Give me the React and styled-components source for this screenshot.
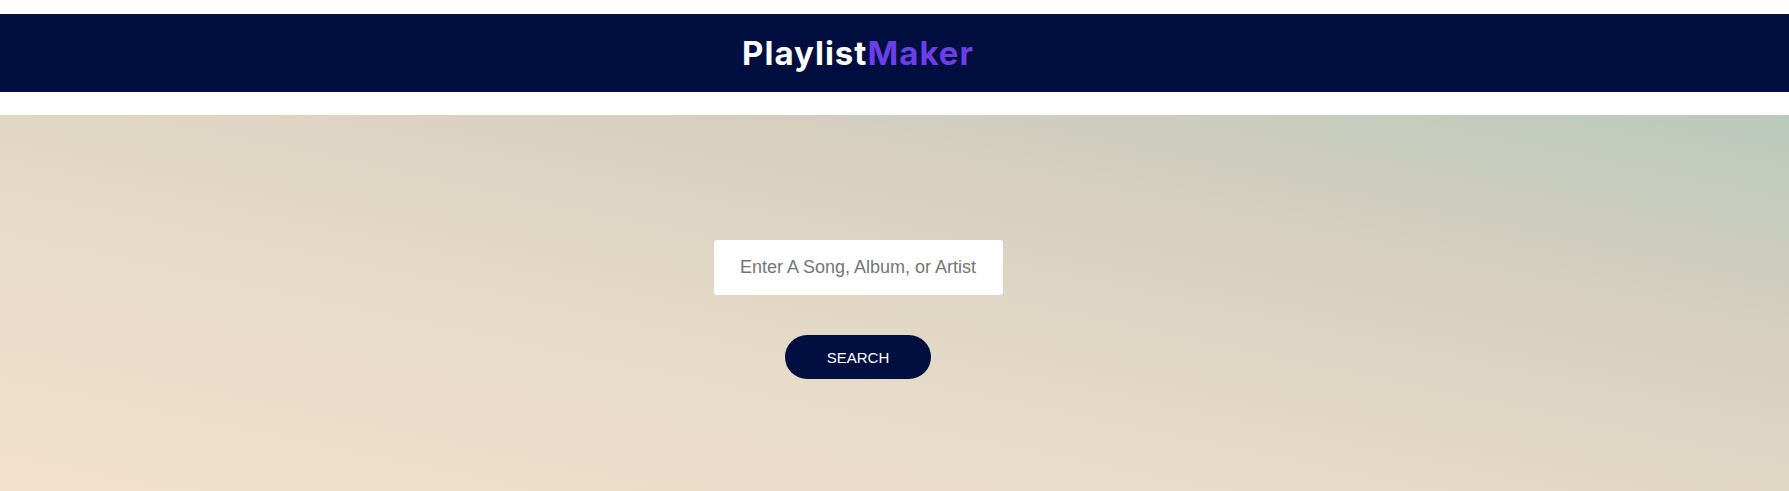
import React, { useState } from 'react';
import styled, { createGlobalStyle } from 'styled-components';

const GlobalStyle = createGlobalStyle`
  html, body {
    margin: 0;
    padding: 0;
    background: #ffffff;
    overflow: hidden;
  }
`

const Page = styled.div`
  padding-top: 14px;
  min-height: 491px;
  box-sizing: border-box;
  display: flex;
  flex-direction: column;
`

const Header = styled.header`
  height: 78px;
  background: #010e40;
  display: flex;
  align-items: center;
  justify-content: center;
  padding-right: 73px;
`

const Title = styled.h1`
  margin: 0;
  font-family: "Inter", "Open Sans", sans-serif;
  font-weight: 700;
  font-size: 33px;
  letter-spacing: 1px;
  color: #ffffff;

  span {
    color: #6b3fe8;
  }
`

const Hero = styled.main`
  margin-top: 23px;
  flex: 1;
  background: linear-gradient(to top right, #f2e0cb 0%, #e8dcc9 35%, #d8d0bf 68%, #bbc9bd 100%);
  display: flex;
  flex-direction: column;
  align-items: center;
  padding: 125px 73px 0 0;
  gap: 40px;
`

const SearchInput = styled.input`
  width: 289px;
  height: 55px;
  box-sizing: border-box;
  border: none;
  border-radius: 3px;
  background: #ffffff;
  font-family: "Liberation Sans", Arial, sans-serif;
  font-size: 18px;
  text-align: center;
  color: #333;
  outline: none;

  &::placeholder {
    color: #757575;
  }
`

const SearchButton = styled.button`
  width: 146px;
  height: 44px;
  border: none;
  border-radius: 22px;
  background: #010e40;
  color: white;
  font-family: "Liberation Sans", Arial, sans-serif;
  font-size: 15px;
  cursor: pointer;
`

const App = () => {
    const [term, setTerm] = useState('')

    return (
        <Page>
            <GlobalStyle />
            <Header>
                <Title>Playlist<span>Maker</span></Title>
            </Header>
            <Hero>
                <SearchInput
                    placeholder="Enter A Song, Album, or Artist"
                    value={term}
                    onChange={(e) => setTerm(e.target.value)}
                />
                <SearchButton>SEARCH</SearchButton>
            </Hero>
        </Page>
    );
}

export default App;
